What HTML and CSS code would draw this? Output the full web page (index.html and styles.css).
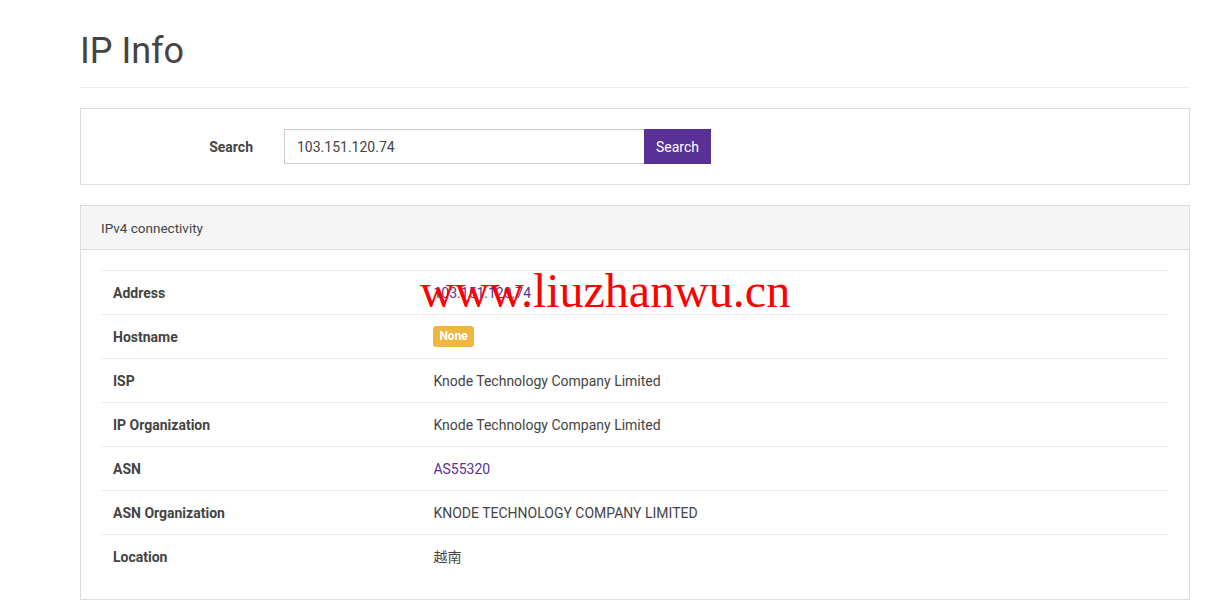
FILE: index.html
```html
<!DOCTYPE html>
<html lang="en">
<head>
<meta charset="utf-8">
<title>IP Info</title>
<link rel="stylesheet" href="styles.css">
</head>
<body>
<div class="container">
  <h1 class="page-title">IP Info</h1>
  <hr class="divider">

  <div class="panel search-panel">
    <form class="search-form">
      <label class="search-label" for="ip">Search</label>
      <div class="input-group">
        <input id="ip" class="search-input" type="text" value="103.151.120.74">
        <button class="search-btn" type="button">Search</button>
      </div>
    </form>
  </div>

  <div class="panel info-panel">
    <div class="panel-heading">IPv4 connectivity</div>
    <div class="panel-body">
      <table class="info-table">
        <tr><th>Address</th><td><a class="link" href="#">103.151.120.74</a></td></tr>
        <tr><th>Hostname</th><td><span class="badge">None</span></td></tr>
        <tr><th>ISP</th><td>Knode Technology Company Limited</td></tr>
        <tr><th>IP Organization</th><td>Knode Technology Company Limited</td></tr>
        <tr><th>ASN</th><td><a class="link" href="#">AS55320</a></td></tr>
        <tr><th>ASN Organization</th><td>KNODE TECHNOLOGY COMPANY LIMITED</td></tr>
        <tr><th>Location</th><td class="cjk">越南</td></tr>
      </table>
    </div>
  </div>
</div>
<div class="watermark">www.liuzhanwu.cn</div>
</body>
</html>
```

FILE: styles.css
```css
* { box-sizing: border-box; }
html, body { margin: 0; padding: 0; background: #fff; }
body {
  font-family: Roboto, "Noto Sans CJK SC", sans-serif;
  font-size: 14px;
  line-height: 20px;
  color: #444;
}
.container {
  width: 1110px;
  margin-left: 80px;
  padding-top: 27px;
}
.page-title {
  margin: 0;
  font-size: 36px;
  line-height: 48px;
  font-weight: 400;
  color: #444;
}
.divider {
  margin: 12px 0 20px;
  border: 0;
  border-top: 1px solid #eee;
  height: 0;
}
.panel {
  border: 1px solid #ddd;
  background: #fff;
  margin-bottom: 20px;
}
.search-panel {
  padding: 20px;
}
.search-form {
  display: flex;
  align-items: center;
  margin: 0;
}
.search-label {
  width: 152px;
  text-align: right;
  font-weight: 700;
  margin-right: 31px;
}
.input-group {
  display: flex;
  width: 427px;
  height: 35px;
}
.search-input {
  flex: 1;
  height: 35px;
  border: 1px solid #ccc;
  border-right: 0;
  padding: 0 12px;
  font: inherit;
  color: #444;
  outline: none;
}
.search-btn {
  width: 67px;
  height: 35px;
  border: 0;
  background: #593196;
  color: #fff;
  font: inherit;
  padding: 0;
}
.panel-heading {
  height: 44px;
  display: flex;
  align-items: center;
  padding: 0 20px;
  background: #f5f5f5;
  border-bottom: 1px solid #ddd;
  font-size: 13.5px;
}
.panel-body {
  padding: 20px;
}
.info-table {
  width: 100%;
  border-collapse: collapse;
}
.info-table th,
.info-table td {
  border-top: 1px solid #eee;
  padding: 0 12px;
  height: 44px;
  text-align: left;
  vertical-align: middle;
}
.info-table th {
  width: 30%;
  font-weight: 700;
}
.link {
  color: #593196;
  text-decoration: none;
}
.badge {
  display: inline-block;
  vertical-align: middle;
  background: #eeb840;
  color: #fff;
  font-size: 12px;
  font-weight: 700;
  line-height: 15px;
  padding: 3px 6px;
  border-radius: 3px;
}
.watermark {
  position: absolute;
  left: 420px;
  top: 263px;
  font-family: "Liberation Serif", serif;
  font-size: 48px;
  line-height: 56px;
  color: #f00;
  pointer-events: none;
}
```
